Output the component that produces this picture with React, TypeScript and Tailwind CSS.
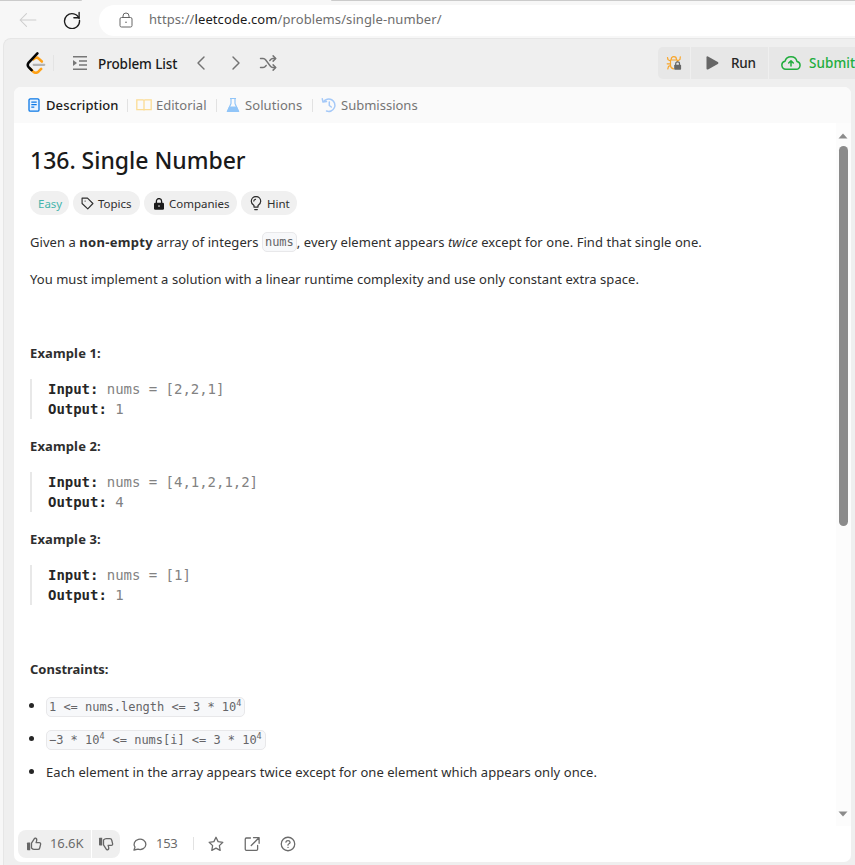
import React from 'react';

const ui = "font-['Noto_Sans','Segoe_UI',sans-serif]";

type IconProps = { className?: string };

function Stroke({ className = '', d, width = 1.5, box = '0 0 24 24' }: { className?: string; d: string[]; width?: number; box?: string }) {
  return (
    <svg viewBox={box} fill="none" stroke="currentColor" strokeWidth={width} strokeLinecap="round" strokeLinejoin="round" className={`block shrink-0 ${className}`}>
      {d.map((p) => (
        <path key={p} d={p} />
      ))}
    </svg>
  );
}

function Logo({ className = '' }: IconProps) {
  return (
    <svg viewBox="0 0 24 24" fill="none" strokeLinecap="round" strokeLinejoin="round" strokeWidth="2.8" className={`block shrink-0 ${className}`}>
      <path d="M9 8 11 6.600q2-1.200 4 .6l3.400 3.200" stroke="#ffa116" />
      <path d="M6 18.500l3 3q2.800 2.400 5.600 0l3-3" stroke="#ffa116" />
      <path d="M9.500 14h11.500" stroke="#b3b3b3" strokeWidth="2.400" />
      <path d="M13.500 1.500 4 11.500q-2 2.800 0 5l3.200 3.300" stroke="#050505" />
    </svg>
  );
}

function BugLock() {
  return (
    <svg viewBox="0 0 16 16" fill="none" className="block h-4 w-4 shrink-0">
      <path d="M5.200 4.300q0-2.600 2.600-2.600t2.600 2.600M4.500 5h6.800M4.500 5v5.200q0 3 3 3.600M11.300 5v1.500M1.500 2.500l.5 2.200 2.500 1.300M14.300 1.800l-.3 2.700-2.500 1.500M1.200 8.800h3.100M1.800 14l.7-2.600 2.200-1" stroke="#f9a62b" strokeWidth="1.200" strokeLinecap="round" />
      <path d="M9.700 10V8.700q0-1.900 1.900-1.900t1.900 1.900V10" stroke="#666" strokeWidth="1.200" />
      <rect x="8.200" y="9.700" width="6.900" height="5" rx="0.800" fill="#666" />
    </svg>
  );
}

function Thumb({ className = '' }: IconProps) {
  return (
    <svg viewBox="0 0 16 16" className={`block h-4 w-4 shrink-0 ${className}`}>
      <path d="M1 7.200q0-.7.700-.7h2.500v7.700H1.700q-.7 0-.7-.7z" fill="#666" />
      <path d="M5.500 7.200 8.400 2.700q.3-.8 1.200-.5 1.600.6 1 2.700l-.5 1.700h3.100q1.700.1 1.400 1.700l-.9 3.700q-.3 1.400-1.700 1.400H8.200q-1.400 0-2.700-1.400z" fill="none" stroke="#666" strokeWidth="1.300" strokeLinejoin="round" />
    </svg>
  );
}

function Chip({ className, children }: { className: string; children: React.ReactNode }) {
  return <span className={`flex h-6 items-center whitespace-nowrap rounded-full bg-[#f0f0f0] pt-px text-[11.500px] ${className}`}>{children}</span>;
}

function Example({ n, input, output }: { n: number; input: string; output: string }) {
  return (
    <section className="h-[93px]">
      <h2 className="h-5 text-[13px] font-bold leading-5 tracking-[0.130px]">Example {n}:</h2>
      <pre className="mt-[16px] h-10 border-l-2 border-[#e8e8e8] pl-4 font-['DejaVu_Sans_Mono',monospace] text-[14px] leading-5 tracking-[-0.030px] text-[#828282]">
        <b className="text-[#262626]">Input:</b>{` ${input}\n`}
        <b className="text-[#262626]">Output:</b>{` ${output}`}
      </pre>
    </section>
  );
}

const code = "inline-flex h-5 items-center whitespace-pre rounded-[5px] border border-[#e8e8ea] bg-[#f7f8fa] px-[2px] font-['DejaVu_Sans_Mono',monospace] text-[12px] leading-none tracking-[-0.025px] text-[#656568]";

function Power() {
  return <span className="w-[6px] -translate-y-[3px] text-[8.500px]">4</span>;
}

function Constraint({ children }: { children: React.ReactNode }) {
  return (
    <li className="flex h-[33px] items-center">
      <span className="-ml-px mb-[2px] mr-[12px] h-[5px] w-[5px] rounded-full bg-[#262626]" />
      {children}
    </li>
  );
}

const Divider = ({ className = '' }: IconProps) => <span className={`h-[13px] w-px shrink-0 bg-[#e2e2e2] ${className}`} />;

export default function App() {
  return (
    <div className={`flex h-[865px] w-[855px] flex-col overflow-hidden whitespace-nowrap bg-[#f7f7f7] text-[#2e2e2e] ${ui}`}>
      <div className="flex h-[2px] w-full justify-between">
        <span className="h-px w-[82px] rounded-br bg-[#cbcbcb]" />
        <span className="h-px w-[524px] rounded-bl bg-[#cbcbcb]" />
      </div>
      <header className="flex h-9 items-center pb-px">
        <Stroke className="ml-[19px] h-[18px] w-[18px] text-[#cdcdcd]" d={['M22.500 12H1.500M10 3.500 1.500 12l8.500 8.500']} width={1.4} />
        <Stroke className="ml-[26px] h-[18px] w-[18px] text-[#1b1b1b]" d={['M21.500 10.200A10 10 0 1 0 22 12.500', 'M21.500 2v7h-7']} width={1.800} />
        <div className="ml-[18px] mt-px flex h-[31px] flex-1 items-center rounded-l-full bg-white pl-5">
          <svg viewBox="0 0 14 16" fill="none" stroke="#666" className="h-4 w-[14px]">
            <rect x="1" y="5.500" width="12" height="9.500" rx="1.500" />
            <path d="M4 5.500V4a3 3 0 0 1 6 0v1.500" />
            <circle cx="7" cy="10.200" r=".8" fill="#666" stroke="none" />
          </svg>
          <span className="ml-[16px] text-[13px] tracking-[0.090px] text-[#6e6e6e]">
            https://<span className="text-[#1b1b1b]">leetcode.com</span>/problems/single-number/
          </span>
        </div>
      </header>

      <div className="ml-[3px] flex flex-1 flex-col rounded-tl-lg border-l border-t border-[#e6e6e6] bg-[#efefef]">
        <nav className="flex h-12 items-center">
          <Logo className="ml-[21px] h-[22px] w-[22px]" />
          <span className="ml-[6px] h-4 w-px bg-[#e4e4e4]" />
          <svg viewBox="0 0 16 16" className="ml-[18px] h-4 w-4 text-[#777]" fill="none" stroke="currentColor" strokeWidth="1.600">
            <path d="M1 1.800h14M7 6h8M7 10h8M1 14.200h14" />
            <path d="M1 5v6l4-3z" fill="currentColor" stroke="none" />
          </svg>
          <span className="ml-[10px] w-[80px] pt-[2px] text-[13.500px] font-medium tracking-[-0.100px] text-[#1a1a1a]">Problem List</span>
          <Stroke className="ml-[14px] h-[18px] w-[18px] text-[#737373]" d={['M16 4 8 12l8 8']} width={1.900} />
          <Stroke className="ml-[17px] h-[18px] w-[18px] text-[#737373]" d={['m8 4 8 8-8 8']} width={1.900} />
          <Stroke className="ml-[14px] h-[18px] w-[18px] text-[#737373]" d={['M2 6h3.500q2 0 3.500 2l6 8q1.500 2 3.500 2H22', 'M2 18h3.500q2 0 3.500-2l.6-.8', 'M14.400 8.800 15 8q1.500-2 3.500-2H22', 'm18.800 2.500 3.500 3.500-3.500 3.500', 'm18.800 14.500 3.500 3.500-3.500 3.500']} width={1.900} />
          <div className="ml-auto flex h-8 w-[197px] gap-px overflow-hidden rounded-l-[5px]">
            <span className="flex w-8 shrink-0 items-center justify-center bg-[#e7e7e7]"><BugLock /></span>
            <span className="flex w-[77px] shrink-0 items-center bg-[#e7e7e7] pl-[15px] text-[13.500px] font-medium tracking-[-0.200px] text-[#262626]">
              <svg viewBox="0 0 13 14" className="mr-3 h-[14px] w-[13px]" fill="#666"><path d="M.5 1.500Q.5-.2 2 .6l9.800 5.500q1.200.9 0 1.800L2 13.400Q.5 14 .5 12.500z" /></svg>
              Run
            </span>
            <span className="flex w-[90px] shrink-0 items-center bg-[#e7e7e7] pl-[12px] text-[13.500px] font-medium tracking-[0.050px] text-[#21ad3d]">
              <Stroke box="0 0 20 16" className="mr-2 h-4 w-5" d={['M5 14.200h10.200a3.900 3.900 0 0 0 .8-7.700A6.200 6.200 0 0 0 4 6.300a4 4 0 0 0 1 7.900Z', 'M10 11V6M7.700 8 10 5.700 12.300 8']} width={1.500} />
              Submit
            </span>
          </div>
        </nav>

        <main className="ml-[10px] flex h-[775px] w-[837px] flex-col overflow-hidden rounded-[7px] bg-white">
          <div className="flex h-9 items-center bg-[#fafafa] text-[13px] text-[#757575]">
            <svg viewBox="0 0 12 14" className="ml-[14px] h-[14px] w-3 text-[#0b78e6]" fill="none" stroke="currentColor" strokeWidth="1.300">
              <rect x="1" y=".8" width="10" height="12.400" rx="1.300" fill="#e8f3ff" />
              <path d="M3.300 4.200h5.400M3.300 6.700h5.400M3.300 9.200h3" />
            </svg>
            <span className="ml-[6px] w-[73px] pt-[2px] font-medium tracking-[0.120px] text-[#1a1a1a]">Description</span>
            <Divider className="ml-[8px]" />
            <svg viewBox="0 0 16 14" className="ml-[8px] h-[14px] w-4" fill="none" stroke="#fbdc94" strokeWidth="1.300">
              <path d="M.8 1.800H7q1 0 1 1v9.700q0-.8-1-.8H.8zM15.200 1.800H9q-1 0-1 1v9.700q0-.8 1-.8h6.200z" />
            </svg>
            <span className="ml-[4px] w-[50px] pt-[2px]">Editorial</span>
            <Divider className="ml-[10px]" />
            <svg viewBox="0 0 14 16" className="ml-[9px] h-4 w-[14px]" fill="none" stroke="#91c5f8" strokeWidth="1.200">
              <path d="M4 1.500h6M5 1.500v5L1.500 14.500h11L9 6.500v-5" strokeLinejoin="round" />
              <path d="M3.500 10h7l2 4.500h-11z" fill="#91c5f8" />
            </svg>
            <span className="ml-[5px] w-[58px] pt-[2px] tracking-[0.080px]">Solutions</span>
            <Divider className="ml-[9px]" />
            <svg viewBox="0 0 16 16" className="ml-[8px] h-4 w-4" fill="none" stroke="#a5c9f8" strokeWidth="1.500" strokeLinecap="round" strokeLinejoin="round">
              <path d="M2.500 4.800A6.200 6.200 0 1 1 5.500 14M1.300 1.800l.7 3.300 3.500-.5M8.300 5v3.500l2 1.500" />
            </svg>
            <span className="ml-[4px] pt-[2px]">Submissions</span>
          </div>

          <div className="flex h-[703px]">
            <article className="w-[822px] overflow-hidden pl-4 text-[13px]">
              <h1 className="mt-[21px] h-8 text-[23px] font-medium leading-8 tracking-[-0.020px] text-[#1a1a1a]">136. Single Number</h1>
              <div className="mt-[15px] flex gap-1">
                <Chip className="w-[39px] pl-2 text-[#46b5ad]">Easy</Chip>
                <Chip className="w-[67px] pl-2">
                  <Stroke className="mr-[4px] h-[13px] w-[13px]" d={['M2 2h10l10 10-9.500 10L2 12z', 'M7.500 7.500h.1']} width={2.100} />Topics
                </Chip>
                <Chip className="w-[93px] pl-[9px]">
                  <svg viewBox="0 0 12 12" className="mr-[4px] h-3 w-3" fill="none"><path d="M3.400 5V3.200a2.600 2.600 0 0 1 5.200 0V5" stroke="#1b1b1b" strokeWidth="1.300" /><rect x="1" y="4.700" width="10" height="7" rx="1.300" fill="#1b1b1b" /><circle cx="6" cy="8.100" r=".8" fill="#eee" /></svg>
                  Companies
                </Chip>
                <Chip className="w-14 pl-[9px]">
                  <Stroke box="0 0 12 15" className="mr-[5px] h-[15px] w-3" d={['M4 11V9.500Q1.300 7.800 1.300 5.200a4.700 4.700 0 0 1 9.400 0Q10.700 7.800 8 9.500V11z', 'M4.700 13.500h2.600M3.800 5Q4 3.500 5.500 3.300']} width={1.250} />Hint
                </Chip>
              </div>
              <p className="mt-[16px] flex h-[22px] items-center whitespace-pre leading-[22px] tracking-[0.060px]">
                <span>Given a </span><b className="tracking-[0.300px]">non-empty</b><span> array of integers </span>
                <code className={code}>nums</code><span>, every element appears </span><i>twice</i><span> except for one. Find that single one.</span>
              </p>
              <p className="mt-[15px] h-[22px] leading-[22px] tracking-[0.045px]">You must implement a solution with a linear runtime complexity and use only constant extra space.</p>
              <div className="pt-[53px]">
                <Example n={1} input="nums = [2,2,1]" output="1" />
                <Example n={2} input="nums = [4,1,2,1,2]" output="4" />
                <Example n={3} input="nums = [1]" output="1" />
              </div>
              <h2 className="mt-[37px] h-5 font-bold leading-5 tracking-[-0.010px]">Constraints:</h2>
              <ul className="mt-[11px]">
                <Constraint><code className={code}>{'1 <= nums.length <= 3 * 10'}<Power /></code></Constraint>
                <Constraint><code className={code}>−3 * 10<Power />{' <= nums[i] <= 3 * 10'}<Power /></code></Constraint>
                <Constraint><span className="tracking-[0.055px]">Each element in the array appears twice except for one element which appears only once.</span></Constraint>
              </ul>
            </article>
            <div className="flex w-[15px] flex-col items-center bg-[#fcfcfc] pr-px">
              <svg viewBox="0 0 10 6" className="mt-[10px] h-[6px] w-[10px]" fill="#8b8b8b"><path d="m.5 5.500 4.500-5 4.500 5z" /></svg>
              <span className="mt-[7px] h-[380px] w-[9px] rounded-full bg-[#8b8b8b]" />
              <svg viewBox="0 0 10 6" className="mb-[9px] mt-auto h-[6px] w-[10px]" fill="#8b8b8b"><path d="m.5.500 4.500 5 4.500-5z" /></svg>
            </div>
          </div>

          <footer className="flex h-9 items-center pb-px text-[13px] text-[#6b6b6b]">
            <div className="ml-[4px] flex h-7 gap-px overflow-hidden rounded-[8px]">
              <span className="flex w-[73px] items-center bg-[#efefef] pl-2"><Thumb /><span className="ml-[8px] pt-px tracking-[-0.100px]">16.6K</span></span>
              <span className="flex w-[28px] items-center bg-[#efefef] pl-[6px]"><Thumb className="-scale-y-100" /></span>
            </div>
            <Stroke box="0 0 16 16" className="ml-[12px] h-4 w-4" d={['M2 14l1-2.900A5.900 5.200 0 1 1 6 13.200Z']} width={1.300} />
            <span className="ml-[8px] w-[22px] pt-px tracking-[-0.300px]">153</span>
            <Divider className="ml-[15px]" />
            <Stroke className="ml-[13px] h-[18px] w-[18px]" d={['m12 3 2.800 5.800 6.300.9-4.600 4.500 1.100 6.300-5.600-3-5.600 3 1.100-6.300L2.900 9.700l6.300-.9z']} width={1.700} />
            <Stroke className="ml-[18px] h-[18px] w-[18px]" d={['M14 3.500h7.500V11M21 4l-10 10M10 4H4.500Q3 4 3 5.500v13.500Q3 20.500 4.500 20.500H18q1.500 0 1.500-1.500v-5']} width={1.700} />
            <Stroke className="ml-[18px] h-[18px] w-[18px]" d={['M12 3a9 9 0 1 0 0 18 9 9 0 0 0 0-18', 'M9.200 9.500Q9.500 7.500 12 7.500T14.800 9.700Q14.800 11 13.300 11.700T12 13.500M12 16.500h.1']} width={1.700} />
          </footer>
        </main>
      </div>
    </div>
  );
}
